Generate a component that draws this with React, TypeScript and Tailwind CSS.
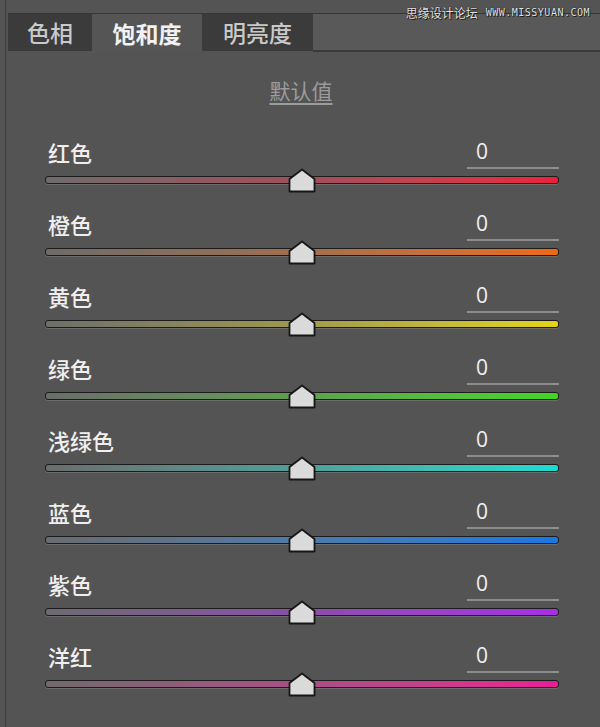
const FONT = { fontFamily: '"Noto Sans CJK SC", "Noto Sans", sans-serif' }

const ROWS = [
  { label: "红色", track: "from-[#6e6a6b] via-[#a04e5c] to-[#ec1f3a]" },
  { label: "橙色", track: "from-[#6e6c6a] via-[#a0704e] to-[#ee6a0c]" },
  { label: "黄色", track: "from-[#6e6e6a] via-[#a09a4a] to-[#e4d412]" },
  { label: "绿色", track: "from-[#6a6e6a] via-[#60a04e] to-[#3ed81c]" },
  { label: "浅绿色", track: "from-[#6a6e6e] via-[#4ea09a] to-[#18dcd0]" },
  { label: "蓝色", track: "from-[#6a6c70] via-[#4e7aa8] to-[#1678e6]" },
  { label: "紫色", track: "from-[#6c6a70] via-[#8a4ea8] to-[#a82ee8]" },
  { label: "洋红", track: "from-[#706a6c] via-[#a84e86] to-[#e81c94]" },
]

function Thumb() {
  return (
    <svg width="28" height="25" viewBox="0 0 28 25" className="absolute left-1/2 top-[-8px] -translate-x-1/2">
      <polygon points="14,1.5 26.5,11 26.5,23.5 1.5,23.5 1.5,11" fill="#dadada" stroke="#161616" strokeWidth="1.8" strokeLinejoin="round" />
    </svg>
  )
}

function Row({ label, track }: { label: string; track: string }) {
  return (
    <div className="h-[72px] pl-[45px] pr-[41px]">
      <div className="h-[34px] flex items-center justify-between">
        <span className="pl-[3px] text-[22px] leading-none font-medium text-[#efefef]">{label}</span>
        <div className="w-[92px] h-full border-b-2 border-[#8c8c8c] flex items-center pl-[9px] text-[21px] leading-none text-[#f0f0f0]" style={{ fontFamily: '"Open Sans", sans-serif' }}>
          0
        </div>
      </div>
      <div className="relative mt-[7px] h-[8px]">
        <div className={`h-full rounded-[3px] border border-[#1c1c1c] bg-gradient-to-r ${track} shadow-[0_1px_0_#6c6c6c]`} />
        <Thumb />
      </div>
    </div>
  )
}

export default function App() {
  return (
    <div className="w-[600px] h-[727px] bg-[#545454] relative overflow-hidden" style={FONT}>
      <div className="absolute left-[5px] top-0 bottom-0 w-px bg-[#3c3c3c]" />
      <div className="absolute right-[10px] top-[7px] flex items-center gap-[8px] text-[12px] leading-none text-[#e4e4e4] [text-shadow:0_0_1px_#000,1px_1px_0_#222]">
        <span>思缘设计论坛</span>
        <span style={{ fontFamily: '"DejaVu Sans Mono", monospace' }} className="text-[10px] tracking-[0.5px]">WWW.MISSYUAN.COM</span>
      </div>

      <div className="pt-[13px] pl-[8px]">
        <div className="border-t border-[#353535] flex h-[39px]">
          <div className="w-[84px] h-[37px] bg-[#3b3b3b] flex items-center justify-center text-[23px] font-medium text-[#c9c9c9]">色相</div>
          <div className="w-[110px] h-[38px] bg-[#555555] flex items-center justify-center text-[23px] font-semibold text-[#f2f2f2]">饱和度</div>
          <div className="w-[111px] h-[37px] bg-[#3b3b3b] flex items-center justify-center text-[23px] font-medium text-[#c9c9c9]">明亮度</div>
          <div className="flex-1 h-[38px] bg-[#595959] border-b-2 border-[#3a3a3a]" />
        </div>
      </div>

      <div className="mt-[28px] flex justify-center">
        <span className="text-[21px] leading-none text-[#9c9c9c] underline underline-offset-[4px] pl-[2px]">默认值</span>
      </div>

      <div className="mt-[34px]">
        {ROWS.map((r) => (
          <Row key={r.label} label={r.label} track={r.track} />
        ))}
      </div>
    </div>
  )
}
